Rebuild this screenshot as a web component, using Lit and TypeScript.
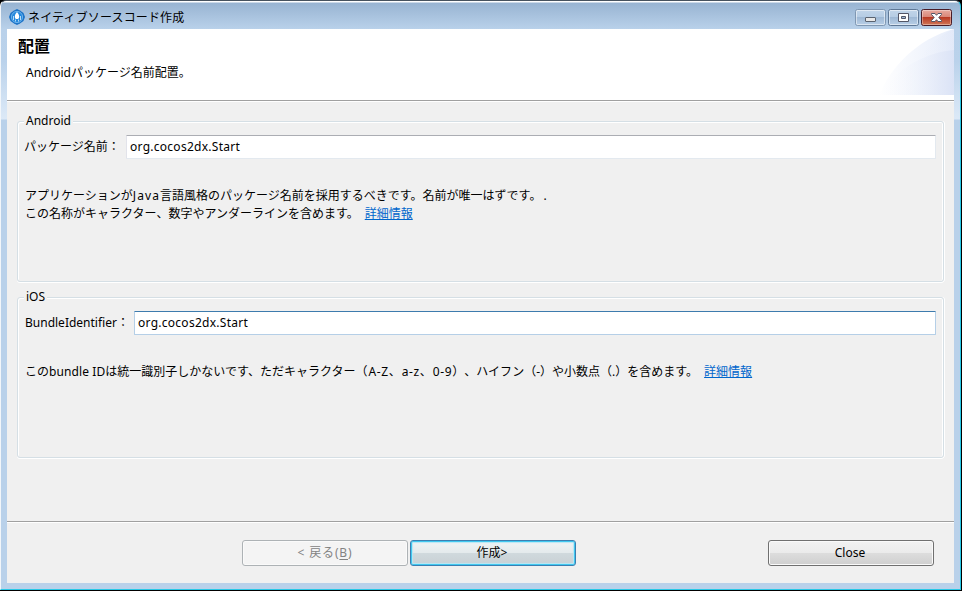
import { LitElement, html, css, svg } from "lit";
import { customElement, property } from "lit/decorators.js";

const base = css`
  * { box-sizing: border-box; }
`;

@customElement("config-group")
class ConfigGroup extends LitElement {
  @property() legend = "";
  static styles = [base, css`
    :host { display: block; }
    .group { height: 161px; border: 1px solid #d5dfe5; border-radius: 3px; box-shadow: inset 1px 1px 0 #fff, inset -1px 0 0 #fff, 0 1px 0 #fff, 1px 0 0 #fff; padding: 0 7px; }
    .legend { display: block; width: fit-content; height: 18px; line-height: 18px; margin: -10px 0 0 -1px; padding: 0 2px; background: #f0f0f0; }
  `];
  render() {
    return html`<div class="group"><span class="legend">${this.legend}</span><slot></slot></div>`;
  }
}

@customElement("app-root")
export class AppRoot extends LitElement {
  static styles = [base, css`
    :host { display: block; width: 962px; height: 591px; background: #000; overflow: hidden; font: 12px/18px "Noto Sans", "Noto Sans CJK JP", sans-serif; color: #000; white-space: nowrap; text-spacing-trim: space-all; }
    .window { width: 961px; height: 590px; border-style: solid; border-width: 1px 1px 1px 1px; border-color: #46525e #27c8e6 #27c8e6 #f2f6fa; border-radius: 6px 6px 0 0; padding: 0 6px 6px; background: linear-gradient(#fff 0 1px, #98b4d2 2px, #b9d1ea 28px, #bad2eb 60px, #dce9f7 118px, #b9d1ea 119px); }
    .titlebar { height: 28px; display: flex; align-items: flex-start; padding: 8px 2px 0 2px; }
    .logo { width: 16px; height: 16px; margin: 0 3px 0 0; flex: none; }
    .title { flex: 1; line-height: 18px; letter-spacing: .15px; }
    .controls { display: flex; gap: 2px; }
    .controls svg { display: block; }
    .client { height: 554px; background: #f0f0f0; display: flex; flex-direction: column; }
    .header { height: 71px; background: #fff; display: flex; justify-content: space-between; flex: none; }
    .heading { font-size: 16px; line-height: 22px; font-weight: 700; margin: 6px 0 0 11px; }
    .desc { margin: 7px 0 0 19px; }
    .rule { height: 2px; border-top: 1px solid #a0a0a0; background: #fff; flex: none; }
    .body { height: 419px; padding: 19px 10px 0; display: flex; flex-direction: column; gap: 15px; }
    .row { display: flex; margin-top: 5px; height: 24px; align-items: flex-start; line-height: 23px; }
    .field { flex: 1; height: 24px; border: 1px solid #e3e9ef; border-top-color: #abadb3; border-left-color: #e2e3ea; background: #fff; padding: 0 3px; line-height: 21px; border-radius: 1px; letter-spacing: .27px; }
    .field.focus { border-color: #b5cfe7; border-top-color: #3d7bad; }
    .lbl1 { width: 101px; margin-left: -1px; margin-right: 1px; }
    .lbl2 { width: 109px; }
    .note { margin-top: 28px; }
    .note div { height: 18px; }
    .link { color: #0066cc; text-decoration: underline; margin-left: 6px; }
    .footer { height: 60px; display: flex; padding: 17px 20px 0 235px; gap: 2px; }
    .btn { width: 166px; height: 26px; border: 1px solid #707070; border-radius: 3px; text-align: center; line-height: 23px; padding-right: 2px; box-shadow: inset 0 0 0 1px #fafafa; background: linear-gradient(#f2f2f2, #ebebeb 48%, #dddddd 50%, #cfcfcf); }
    .btn.off { color: #838383; border-color: #adb2b5; background: #f4f4f4; letter-spacing: .85px; padding: 0; }
    .btn.main { border-color: #3c7fb1; box-shadow: inset 0 0 0 1px #40c8f0, inset 0 0 1px 2px #b9e6f4; background: linear-gradient(#f0f4f5, #e4eaec 48%, #d0d9dd 50%, #c8d0d4); }
    .btn.close { margin-left: auto; }
    u { text-underline-offset: 2px; }
    .java { letter-spacing: 1.1px; }
    .dot { margin-left: 2px; }
    .latin { letter-spacing: .1px; }
    .range { letter-spacing: .6px; margin-left: 1px; }
  `];

  private control(kind: "min" | "max" | "close") {
    const red = kind === "close";
    const glyph = kind === "min"
      ? svg`<rect x="10.5" y="8.5" width="10" height="4" rx=".5" fill="#e8e8e8" stroke="#5a6370"/>`
      : kind === "max"
      ? svg`<path fill-rule="evenodd" d="M10.5 4.5h10v8h-10zM13.5 7.5h4v2h-4z" fill="#fff" stroke="#535666"/>`
      : svg`<path d="M10.500 4.500h3.500l1.500 1.800 1.500-1.800h3.500v1l-2.700 3 2.700 3v1h-3.500L15.500 10.700 14 12.500h-3.500v-1l2.700-3-2.700-3z" fill="#fff" stroke="#535666"/>`;
    const top = red ? "#e8aca2" : "#c2d5e9";
    const mid = red ? "#d98577" : "#b5cce4";
    const low = red ? "#b93a25" : "#9fb9d5";
    const end = red ? "#d27b5a" : "#bad0e8";
    const id = `face-${kind}`;
    return html`<svg width="31" height="17" viewBox="0 0 31 17">
      <defs><linearGradient id=${id} x2="0" y2="1"><stop stop-color=${top}/><stop offset=".48" stop-color=${mid}/><stop offset=".5" stop-color=${low}/><stop offset="1" stop-color=${end}/></linearGradient></defs>
      <rect x=".5" y=".5" width="30" height="16" rx="2" fill=${`url(#${id})`} stroke=${red ? "#491c27" : kind === "min" ? "#7f97b2" : "#5f7896"}/>
      <rect x="1.500" y="1.500" width="28" height="14" rx="1" fill="none" stroke="#fff" stroke-opacity=${red ? ".35" : ".5"}/>
      ${glyph}</svg>`;
  }

  render() {
    return html`
    <div class="window">
      <div class="titlebar">
        <svg class="logo" viewBox="0 0 16 16">
          <path d="M8 0 11 1.500 14.500 4 16 8 14.500 12 11 14.500 8 16 5 14.500 1.500 12 0 8 1.500 4 5 1.500z" fill="#1d74c8"/>
          <circle cx="8" cy="8" r="5.600" fill="#2588dc" stroke="#7fc0f2" stroke-width=".8"/>
          <path d="M8 3C9 4.500 10.200 5.500 10.200 7.500S9.500 10 8 10 5.800 9.500 5.800 7.500 7 4.500 8 3z" fill="#fff"/>
          <path d="M4.500 7v4M6.500 10.500v2M9.500 10.500v2M11.500 7v4" stroke="#c5e4fb" stroke-width=".9"/>
        </svg>
        <div class="title">ネイティブソースコード作成</div>
        <div class="controls">${this.control("min")}${this.control("max")}${this.control("close")}</div>
      </div>
      <div class="client">
        <div class="header">
          <div><div class="heading">配置</div><div class="desc">Androidパッケージ名前配置。</div></div>
          <svg width="75" height="66" viewBox="0 0 75 66">
            <defs>
              <linearGradient id="a"><stop stop-color="#fff"/><stop offset="1" stop-color="#e7edfa"/></linearGradient>
              <linearGradient id="b"><stop stop-color="#fff" stop-opacity="0"/><stop offset="1" stop-color="#dbe3f6"/></linearGradient>
            </defs>
            <path d="M0 66C12 38 38 10 75 0V66z" fill="url(#a)"/>
            <path d="M35 36C45 20 60 6 75 0V66H20z" fill="url(#b)" opacity=".35"/>
            <path d="M0 66C15 43 42 24 75 21V66z" fill="url(#b)"/>
          </svg>
        </div>
        <div class="rule"></div>
        <div class="body">
          <config-group legend="Android">
            <div class="row"><span class="lbl1">パッケージ名前：</span><div class="field">org.cocos2dx.Start</div></div>
            <div class="note">
              <div>アプリケーションが<span class="java">Java</span>言語風格のパッケージ名前を採用するべきです。名前が唯一はずです。<span class="dot">.</span></div>
              <div>この名称がキャラクター、数字やアンダーラインを含めます。<span class="link">詳細情報</span></div>
            </div>
          </config-group>
          <config-group legend="iOS">
            <div class="row"><span class="lbl2">BundleIdentifier：</span><div class="field focus">org.cocos2dx.Start</div></div>
            <div class="note"><div>この<span class="latin">bundle ID</span>は統一識別子しかないです、ただキャラクター（<span class="range">A-Z</span>、<span class="range">a-z</span>、<span class="range">0-9</span>）、ハイフン（-）や小数点（.）を含めます。<span class="link">詳細情報</span></div></div>
          </config-group>
        </div>
        <div class="rule"></div>
        <div class="footer">
          <div class="btn off">&lt; 戻る(<u>B</u>)</div>
          <div class="btn main">作成&gt;</div>
          <div class="btn close">Close</div>
        </div>
      </div>
    </div>`;
  }
}
